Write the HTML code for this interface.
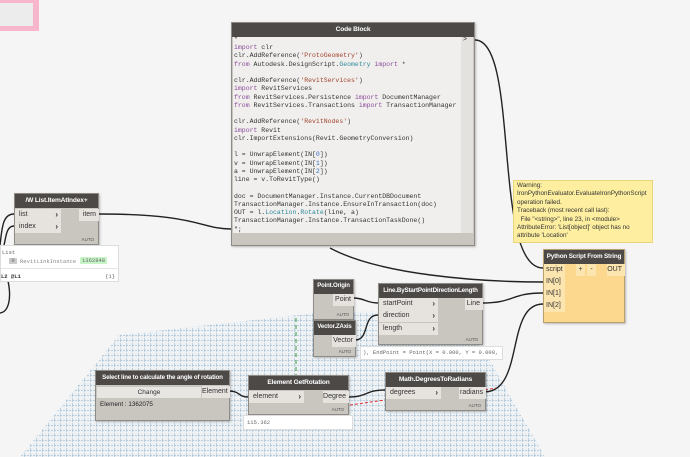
<!DOCTYPE html>
<html><head><meta charset="utf-8">
<style>
*{box-sizing:border-box;margin:0;padding:0}
body{width:690px;height:457px;overflow:hidden;background:#f5f5f5;font-family:"Liberation Sans",sans-serif;position:relative}
.n{position:absolute;background:#c9c5bf;border:1px solid #8e8b86;box-shadow:1px 1px 2px rgba(0,0,0,.25)}
.h{background:#4c4947;color:#fff;font-weight:bold;font-size:6.6px;letter-spacing:-0.15px;text-align:center;line-height:13px;height:14px;white-space:nowrap;overflow:hidden}
.p{position:absolute;background:#e6e3df;font-size:7px;color:#333;line-height:12px;padding-left:4px;height:12px}
.p b{position:absolute;right:3px;top:0;font-weight:bold;font-size:8px}
.o{position:absolute;background:#e6e3df;font-size:7px;color:#333;line-height:12px;text-align:right;padding-right:3px;height:12px}
.auto{position:absolute;right:4px;bottom:2px;font-size:4.5px;color:#555}
.pv{position:absolute;background:#fff;border:1px solid #ddd;font-family:"Liberation Mono",monospace;font-size:5.5px;color:#666}
.code{font-family:"Liberation Mono",monospace;font-size:6.5px;line-height:8.25px;color:#333;white-space:pre}
.k{color:#8a4a9a}.s{color:#a0452d}.t{color:#2e8b9a}.nm{color:#3a6fc4}
</style></head><body>
<div style="position:absolute;left:0;top:0;width:39px;height:31px;background:#f8b6cc"></div>
<div style="position:absolute;left:0;top:3px;width:33px;height:23px;background:#ececec"></div>

<svg width="690" height="457" style="position:absolute;left:0;top:0">
<defs>
<pattern id="g" width="6" height="5" patternUnits="userSpaceOnUse">
<rect width="6" height="5" fill="#eef2f5"/>
<path d="M0 0.5H6M0.5 0V5" stroke="#a9c3d6" stroke-width="0.7" stroke-dasharray="2 1"/>
</pattern>
</defs>
<polygon points="20,457 119,335 317,313 440,310 484,350 545,457" fill="url(#g)"/>
<path d="M296 318V400" stroke="#3a9a3a" stroke-width="1" stroke-dasharray="4 3"/>
<g fill="none" stroke="#222" stroke-width="1.4">
<path d="M475 40C520 40 492 268 543 268"/>
<path d="M98 214C200 214 200 229 231 229"/>
<path d="M330 248C380 275 480 282 543 282"/>
<path d="M482 303C515 303 510 293 543 293"/>
<path d="M484 392C525 392 505 304 543 304"/>
<path d="M353 298C365 298 366 303 378 303"/>
<path d="M355 340C370 340 362 315 378 315"/>
<path d="M229 391C240 391 238 397 248 397"/>
<path d="M348 397C368 397 365 390 385 390"/>
<path d="M14 214C2 214 2 230 0 245"/>
<path d="M14 226C6 226 6 238 4 245"/>
<path d="M8 281C12 300 8 312 0 313"/>
</g>
<path d="M350 405L385 400" stroke="#e03030" stroke-width="1" stroke-dasharray="3 2" fill="none"/>
<path d="M485 390L496 388" stroke="#e03030" stroke-width="1" stroke-dasharray="3 2" fill="none"/>
</svg>

<!-- List.ItemAtIndex+ -->
<div class="n" style="left:14px;top:193px;width:85px;height:52px">
<div class="h">/W List.ItemAtIndex+</div>
<div class="p" style="left:0;top:15px;width:46px">list<b>›</b></div>
<div class="p" style="left:0;top:27px;width:46px">index<b>›</b></div>
<div class="o" style="left:64px;top:15px;width:20px">item</div>
<div class="auto">AUTO</div>
</div>
<div class="pv" style="left:0;top:245px;width:119px;height:37px">
<div style="position:absolute;left:1px;top:3px">List</div>
<div style="position:absolute;left:8px;top:12px;background:#ccc;width:8px;height:6px;text-align:center;line-height:6px">0</div>
<div style="position:absolute;left:19px;top:12px;color:#888">RevitLinkInstance</div>
<div style="position:absolute;left:79px;top:11px;background:#c8f5c8;padding:0 2px">1362848</div>
<div style="position:absolute;left:0;top:22px;width:117px;border-top:1px solid #e5e5e5"></div>
<div style="position:absolute;left:0;top:27px;color:#333;font-weight:bold">L2 @L1</div>
<div style="position:absolute;right:3px;top:27px">{1}</div>
</div>

<!-- Code Block -->
<div class="n" style="left:231px;top:22px;width:244px;height:224px">
<div class="h">Code Block</div>
<div style="position:absolute;left:1px;top:14px;width:229px;height:196px;background:#f0efed"></div>
<div style="position:absolute;left:229px;top:14px;width:12px;height:196px;background:#e4e2df"></div>
<div style="position:absolute;left:231px;top:13px;font-size:7px;color:#333">&gt;</div>
<div class="code" style="position:absolute;left:2px;top:13px">"
</div>
<div class="code" style="position:absolute;left:2px;top:21px"><span class="k">import</span> clr
clr.AddReference(<span class="s">'ProtoGeometry'</span>)
<span class="k">from</span> Autodesk.DesignScript.<span class="t">Geometry</span> <span class="k">import</span> *

clr.AddReference(<span class="s">'RevitServices'</span>)
<span class="k">import</span> RevitServices
<span class="k">from</span> RevitServices.Persistence <span class="k">import</span> DocumentManager
<span class="k">from</span> RevitServices.Transactions <span class="k">import</span> TransactionManager

clr.AddReference(<span class="s">'RevitNodes'</span>)
<span class="k">import</span> Revit
clr.ImportExtensions(Revit.GeometryConversion)

l = UnwrapElement(IN[<span class="nm">0</span>])
v = UnwrapElement(IN[<span class="nm">1</span>])
a = UnwrapElement(IN[<span class="nm">2</span>])
line = v.ToRevitType()

doc = DocumentManager.Instance.CurrentDBDocument
TransactionManager.Instance.EnsureInTransaction(doc)
OUT = l.<span class="t">Location</span>.<span class="t">Rotate</span>(line, a)
TransactionManager.Instance.TransactionTaskDone()
";</div>
</div>

<!-- Warning -->
<div style="position:absolute;left:513px;top:180px;width:140px;height:63px;background:#fdeea0;border:1px solid #e9d67a;font-size:6.3px;line-height:8.4px;color:#333;padding:1px 3px">Warning:<br>IronPythonEvaluator.EvaluateIronPythonScript<br>operation failed.<br>Traceback (most recent call last):<br>&nbsp; File "&lt;string&gt;", line 23, in &lt;module&gt;<br>AttributeError: 'List[object]' object has no<br>attribute 'Location'</div>

<!-- Python Script From String -->
<div class="n" style="left:543px;top:249px;width:82px;height:74px;background:#fbd88e;border-color:#b8a070">
<div class="h" style="font-size:6.3px">Python Script From String</div>
<div class="p" style="left:0;top:14px;width:21px;background:#fde5b0;padding-left:2px">script</div>
<div class="p" style="left:0;top:26px;width:21px;background:#fde5b0;padding-left:2px">IN[0]</div>
<div class="p" style="left:0;top:38px;width:21px;background:#fde5b0;padding-left:2px">IN[1]</div>
<div class="p" style="left:0;top:50px;width:21px;background:#fde5b0;padding-left:2px">IN[2]</div>
<div class="p" style="left:32px;top:14px;width:9px;background:#fde5b0;padding:0;text-align:center">+</div>
<div class="p" style="left:43px;top:14px;width:9px;background:#fde5b0;padding:0;text-align:center">-</div>
<div class="o" style="left:63px;top:14px;width:18px;background:#fde5b0">OUT</div>
</div>

<!-- Point.Origin -->
<div class="n" style="left:313px;top:279px;width:41px;height:41px">
<div class="h" style="font-size:6px">Point.Origin</div>
<div class="o" style="left:19px;top:14px;width:21px">Point</div>
<div class="auto">AUTO</div>
</div>

<!-- Line.By... -->
<div class="n" style="left:378px;top:283px;width:105px;height:62px">
<div class="h" style="font-size:6.2px">Line.ByStartPointDirectionLength</div>
<div class="p" style="left:0;top:14px;width:59px">startPoint<b>›</b></div>
<div class="p" style="left:0;top:26px;width:59px">direction<b>›</b></div>
<div class="p" style="left:0;top:39px;width:59px">length<b>›</b></div>
<div class="o" style="left:86px;top:14px;width:18px">Line</div>
<div class="auto">AUTO</div>
</div>

<!-- Vector.ZAxis -->
<div class="n" style="left:313px;top:320px;width:43px;height:37px">
<div class="h" style="font-size:6px">Vector.ZAxis</div>
<div class="o" style="left:18px;top:14px;width:24px">Vector</div>
<div class="auto">AUTO</div>
</div>
<div class="pv" style="left:360px;top:346px;width:143px;height:14px;line-height:12px;padding-left:2px;white-space:nowrap;overflow:hidden">), EndPoint = Point(X = 0.000, Y = 0.000, Z =</div>

<!-- Select line -->
<div class="n" style="left:95px;top:370px;width:135px;height:51px">
<div class="h" style="font-size:6.2px">Select line to calculate the angle of rotation</div>
<div style="position:absolute;left:1px;top:16px;width:104px;height:11px;background:#e8e6e3;font-size:6.5px;text-align:center;line-height:11px;color:#333">Change</div>
<div class="o" style="left:106px;top:15px;width:28px">Element</div>
<div style="position:absolute;left:4px;top:30px;font-size:6.3px;color:#222">Element : 1362075</div>
</div>

<!-- Element GetRotation -->
<div class="n" style="left:248px;top:375px;width:101px;height:40px">
<div class="h">Element GetRotation</div>
<div class="p" style="left:0;top:15px;width:55px">element<b>›</b></div>
<div class="o" style="left:74px;top:15px;width:26px">Degree</div>
<div class="auto">AUTO</div>
</div>
<div class="pv" style="left:243px;top:415px;width:110px;height:15px;line-height:13px;padding-left:3px">115.362</div>

<!-- Math.DegreesToRadians -->
<div class="n" style="left:385px;top:372px;width:101px;height:39px">
<div class="h">Math.DegreesToRadians</div>
<div class="p" style="left:0;top:14px;width:55px">degrees<b>›</b></div>
<div class="o" style="left:73px;top:14px;width:27px">radians</div>
<div class="auto">AUTO</div>
</div>
</body></html>
